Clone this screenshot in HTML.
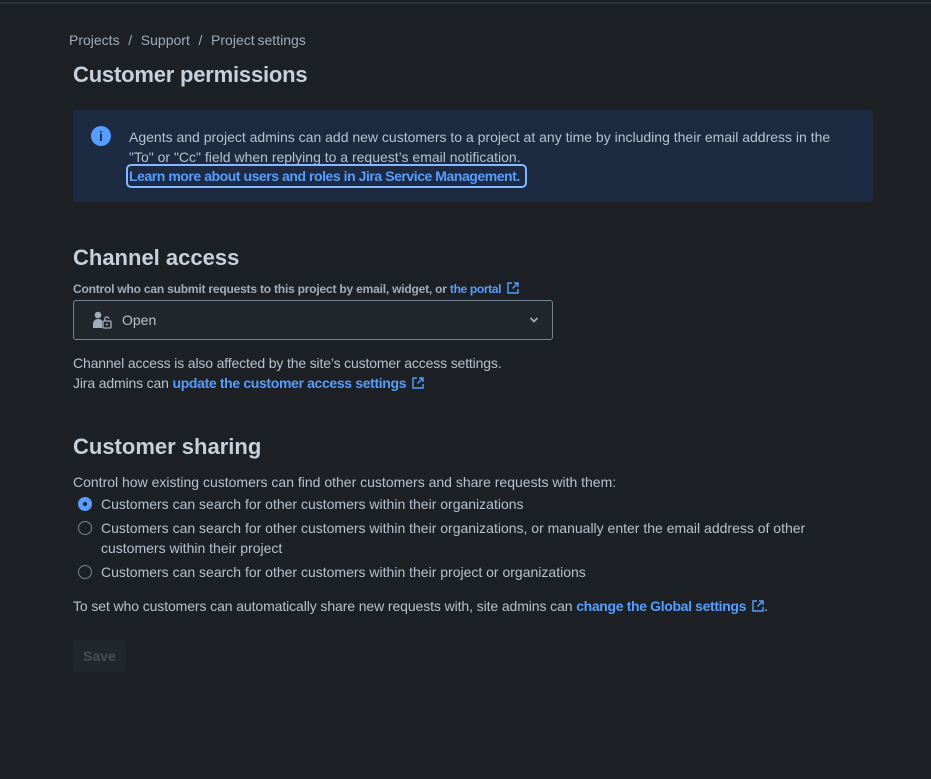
<!DOCTYPE html>
<html><head><meta charset="utf-8"><style>
*{margin:0;padding:0;box-sizing:border-box}
body{width:931px;height:779px;background:#1d2125;font-family:"Liberation Sans",sans-serif;color:#b6c2cf;font-size:14px;position:relative;overflow:hidden}
.top{position:absolute;left:0;top:2px;width:931px;height:2px;background:#2c333a}
.a{position:absolute;white-space:nowrap}
a{color:#579dff;text-decoration:none;font-weight:bold;letter-spacing:-0.35px}
h1{font-size:22px;font-weight:bold;color:#c7d1db;letter-spacing:-0.2px}
h2{font-size:22px;font-weight:bold;color:#c7d1db}
.ext{display:inline-block;vertical-align:-1px;margin-left:6px}
.radio{position:absolute;left:78px;width:14px;height:14px;border-radius:50%;border:1.5px solid #738496}
</style></head><body>
<div class="top"></div>
<div class="a" style="left:69px;top:32px;color:#9fadbc;word-spacing:-1px">Projects&nbsp;&nbsp;&nbsp;/&nbsp;&nbsp;&nbsp;Support&nbsp;&nbsp;&nbsp;/&nbsp;&nbsp;&nbsp;Project settings</div>
<h1 class="a" style="left:73px;top:62px">Customer permissions</h1>
<div class="a" style="left:73px;top:110px;width:800px;height:92px;background:#1c2b41;border-radius:3px"></div>
<div class="a" style="left:91px;top:126px;width:20px;height:20px;border-radius:50%;background:#579dff;color:#1c2b41;font-weight:bold;font-size:14px;text-align:center;line-height:20px">i</div>
<div class="a" style="left:129px;top:127px;line-height:20px">Agents and project admins can add new customers to a project at any time by including their email address in the<br>"To" or "Cc" field when replying to a request’s email notification.</div>
<div class="a" style="left:126px;top:164px;width:401px;height:24px;border:2px solid #85b8ff;border-radius:5px"></div>
<div class="a" style="left:129px;top:168px"><a style="letter-spacing:-0.45px">Learn more about users and roles in Jira Service Management.</a></div>
<h2 class="a" style="left:73px;top:245px">Channel access</h2>
<div class="a" style="left:73px;top:282px;font-size:12px;font-weight:bold;color:#9fadbc;letter-spacing:-0.2px">Control who can submit requests to this project by email, widget, or <a>the portal</a><svg class="ext" width="12" height="12" viewBox="0 0 12 12" fill="none" stroke="#579dff" stroke-width="1.4"><path d="M5 1H1v10h10V7M7 1h4v4M11 1L5.5 6.5"/></svg></div>
<div class="a" style="left:73px;top:300px;width:480px;height:40px;border:1px solid #738496;border-radius:3px;background:#22272b"></div>
<svg class="a" style="left:92px;top:311px" width="20" height="18" viewBox="0 0 20 18"><circle cx="6" cy="4" r="3.3" fill="#9fadbc"/><path d="M1 17v-4c0-3 2-5 5-5 2 0 3 .6 4 1.5V17z" fill="#9fadbc"/><rect x="11" y="10" width="8" height="7" rx="1" fill="none" stroke="#9fadbc" stroke-width="1.3"/><path d="M12.8 10V8a2 2 0 0 1 4-.3" fill="none" stroke="#9fadbc" stroke-width="1.3"/><circle cx="15" cy="13.5" r="1" fill="#9fadbc"/></svg>
<div class="a" style="left:122px;top:312px;color:#b6c2cf">Open</div>
<svg class="a" style="left:528px;top:315px" width="12" height="10" viewBox="0 0 12 10"><path d="M2.5 3l3.5 3.5L9.5 3" fill="none" stroke="#9fadbc" stroke-width="1.8"/></svg>
<div class="a" style="left:73px;top:353px;line-height:20px;letter-spacing:-0.15px">Channel access is also affected by the site’s customer access settings.<br>Jira admins can <a>update the customer access settings</a><svg class="ext" width="12" height="12" viewBox="0 0 12 12" fill="none" stroke="#579dff" stroke-width="1.4"><path d="M5 1H1v10h10V7M7 1h4v4M11 1L5.5 6.5"/></svg></div>
<h2 class="a" style="left:73px;top:434px">Customer sharing</h2>
<div class="a" style="left:73px;top:474px">Control how existing customers can find other customers and share requests with them:</div>
<div class="radio" style="top:497px;background:#579dff;border-color:#579dff"><div style="width:4px;height:4px;background:#1d2125;border-radius:50%;margin:3.5px"></div></div>
<div class="a" style="left:101px;top:496px">Customers can search for other customers within their organizations</div>
<div class="radio" style="top:521px"></div>
<div class="a" style="left:101px;top:518px;line-height:20px">Customers can search for other customers within their organizations, or manually enter the email address of other<br>customers within their project</div>
<div class="radio" style="top:565px"></div>
<div class="a" style="left:101px;top:564px">Customers can search for other customers within their project or organizations</div>
<div class="a" style="left:73px;top:598px;letter-spacing:-0.1px">To set who customers can automatically share new requests with, site admins can <a>change the Global settings</a><svg class="ext" width="12" height="12" viewBox="0 0 12 12" fill="none" stroke="#579dff" stroke-width="1.4"><path d="M5 1H1v10h10V7M7 1h4v4M11 1L5.5 6.5"/></svg>.</div>
<div class="a" style="left:73px;top:640px;width:53px;height:32px;background:#22272b;border-radius:3px;color:#454f59;font-weight:bold;text-align:center;line-height:32px">Save</div>
</body></html>
